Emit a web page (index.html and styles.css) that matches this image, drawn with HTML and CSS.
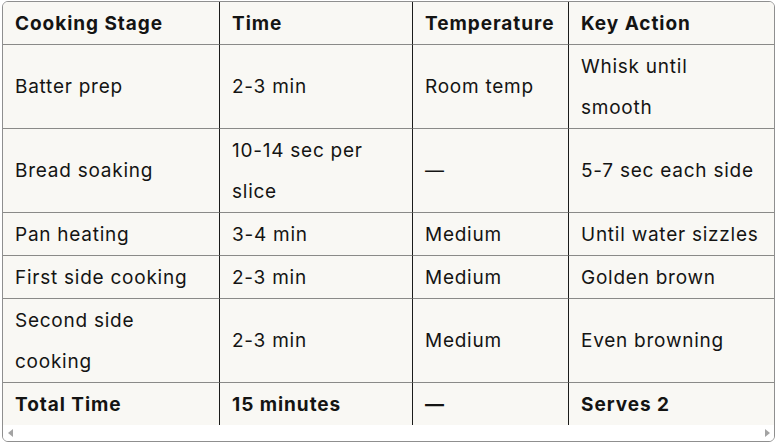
FILE: index.html
```html
<!DOCTYPE html>
<html>
<head>
<meta charset="utf-8">
<link rel="stylesheet" href="styles.css">
</head>
<body>
<div class="wrap">
  <table class="tbl">
    <colgroup>
      <col class="c1"><col class="c2"><col class="c3"><col class="c4">
    </colgroup>
    <thead>
      <tr><th>Cooking Stage</th><th>Time</th><th>Temperature</th><th>Key Action</th></tr>
    </thead>
    <tbody>
      <tr><td>Batter prep</td><td>2-3 min</td><td>Room temp</td><td>Whisk until smooth</td></tr>
      <tr><td>Bread soaking</td><td>10-14 sec per slice</td><td>—</td><td>5-7 sec each side</td></tr>
      <tr><td>Pan heating</td><td>3-4 min</td><td>Medium</td><td>Until water sizzles</td></tr>
      <tr><td>First side cooking</td><td>2-3 min</td><td>Medium</td><td>Golden brown</td></tr>
      <tr><td>Second side cooking</td><td>2-3 min</td><td>Medium</td><td>Even browning</td></tr>
      <tr class="total"><td>Total Time</td><td>15 minutes</td><td>—</td><td>Serves 2</td></tr>
    </tbody>
  </table>
  <div class="scrollbar">
    <span class="arrow arrow-left"></span>
    <span class="arrow arrow-right"></span>
  </div>
</div>
</body>
</html>
```
FILE: styles.css
```css
html, body {
  margin: 0;
  padding: 0;
  background: #ffffff;
}
body {
  font-family: "Inter", "Open Sans", sans-serif;
  color: #141413;
}
.wrap {
  margin: 1px 2px 0 2px;
  width: 771px;
  border: 1px solid #8f8f8f;
  border-radius: 6px;
  overflow: hidden;
  background: #ffffff;
}
.tbl {
  width: 771px;
  table-layout: fixed;
  border-collapse: separate;
  border-spacing: 0;
  background: #f9f8f4;
  font-size: 19px;
  letter-spacing: 0.75px;
}
.c1 { width: 217px; }
.c2 { width: 193px; }
.c3 { width: 156px; }
.c4 { width: 205px; }
.tbl th, .tbl td {
  text-align: left;
  vertical-align: middle;
  padding: 0.5px 12px;
  line-height: 41px;
  border-right: 1px solid #1c1c1b;
  border-bottom: 1px solid #8a8a88;
}
.tbl th { font-weight: 700; letter-spacing: 0.95px; }
.tbl th:last-child, .tbl td:last-child { border-right: none; }
.tbl tr:last-child td { border-bottom: none; }
.total td { font-weight: 700; letter-spacing: 0.95px; }
.scrollbar {
  height: 16px;
  display: flex;
  align-items: center;
  justify-content: space-between;
  padding: 0 4px 0 5px;
  background: #ffffff;
}
.arrow {
  width: 0;
  height: 0;
  border-top: 4px solid transparent;
  border-bottom: 4px solid transparent;
}
.arrow-left { border-right: 5px solid #a3a3a3; }
.arrow-right { border-left: 5px solid #a3a3a3; }
```
